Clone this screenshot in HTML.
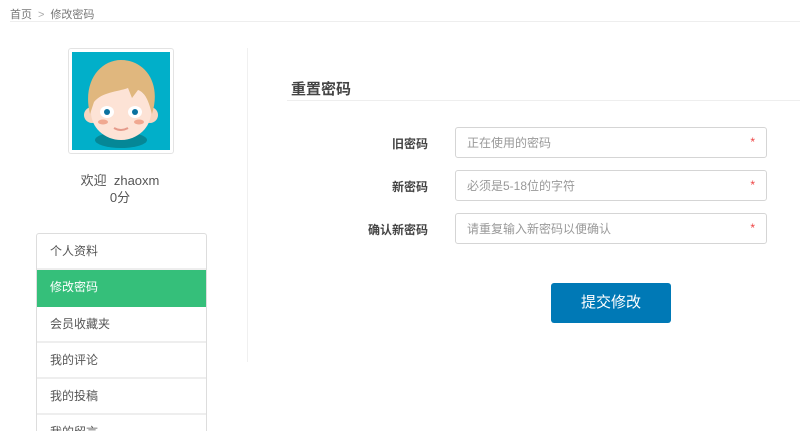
<!DOCTYPE html>
<html><head><meta charset="utf-8"><style>
*{margin:0;padding:0;box-sizing:border-box}
html,body{width:800px;height:431px;overflow:hidden}
body{background:#fff;font-family:"Liberation Sans","Noto Sans CJK SC",sans-serif;color:#555;position:relative}
.a{position:absolute}
.bc{left:10px;top:6px;font-size:11px;color:#777}
.bc span{color:#aaa;margin:0 6px}
.hl{left:10px;top:21px;width:790px;height:1px;background:#eee}
.av{left:68px;top:48px;width:106px;height:106px;border:1px solid #e3e3e3;border-radius:3px;background:#fff}
.vd{left:247px;top:48px;width:1px;height:314px;background:#f0f0f0}
.menu{left:36px;top:233px;width:171px;height:198px;border:1px solid #ddd;border-bottom:0;border-radius:3px 3px 0 0;overflow:hidden}
.menu div{height:36px;line-height:34px;padding-left:13px;font-size:12px;color:#555;border-bottom:2px solid #eee}
.menu .on{background:#35bf7a;color:#fff;border-bottom:0;height:37px}
.lbl{width:120px;text-align:right;font-size:12px;font-weight:bold;color:#444;left:308px}
.in{left:455px;width:312px;height:31px;border:1px solid #d5d5d5;border-radius:3px;font-size:12px;color:#999;padding-left:11px;display:flex;align-items:center}
.in b{position:absolute;right:11px;top:8px;color:#e44;font-weight:normal;line-height:12px}
</style></head><body>
<div class="a bc">首页<span>&gt;</span>修改密码</div>
<div class="a hl"></div>
<div class="a av">
<svg width="98" height="98" style="position:absolute;left:3px;top:3px" viewBox="0 0 98 98">
<rect width="98" height="98" fill="#01afc9"/>
<ellipse cx="49" cy="88" rx="26" ry="8" fill="#058796"/>
<circle cx="20" cy="63" r="8" fill="#f6d5c0"/><circle cx="78" cy="63" r="8" fill="#f6d5c0"/>
<ellipse cx="49" cy="60" rx="30" ry="28" fill="#fde3d6"/>
<path d="M18 62 C10 30 28 8 49 8 C72 8 90 30 80 62 C76 46 72 40 66 38 L60 46 L56 36 C45 40 30 40 22 50 Z" fill="#e0b77e"/>
<ellipse cx="35" cy="60" rx="7" ry="6" fill="#fff"/><ellipse cx="63" cy="60" rx="7" ry="6" fill="#fff"/>
<circle cx="35" cy="60" r="3" fill="#0a72a0"/><circle cx="63" cy="60" r="3" fill="#0a72a0"/>
<ellipse cx="31" cy="70" rx="5" ry="2.5" fill="#f0a890"/><ellipse cx="67" cy="70" rx="5" ry="2.5" fill="#f0a890"/>
<path d="M42 76 Q49 80 56 76" stroke="#e59a8a" stroke-width="2" fill="none"/>
</svg></div>
<div class="a" style="left:60px;top:172px;width:120px;text-align:center;font-size:13px;color:#555;line-height:17px">欢迎&nbsp; zhaoxm<br>0分</div>
<div class="a vd"></div>
<div class="a menu"><div>个人资料</div><div class="on">修改密码</div><div>会员收藏夹</div><div>我的评论</div><div>我的投稿</div><div>我的留言</div></div>
<div class="a" style="left:291px;top:78px;font-size:15px;font-weight:bold;color:#444">重置密码</div>
<div class="a" style="left:287px;top:100px;width:513px;height:1px;background:#eee"></div>
<div class="a lbl" style="top:135px">旧密码</div>
<div class="a lbl" style="top:178px">新密码</div>
<div class="a lbl" style="top:221px">确认新密码</div>
<div class="a in" style="top:127px">正在使用的密码<b>*</b></div>
<div class="a in" style="top:170px">必须是5-18位的字符<b>*</b></div>
<div class="a in" style="top:213px">请重复输入新密码以便确认<b>*</b></div>
<div class="a" style="left:551px;top:283px;width:120px;height:40px;background:#0079b6;border-radius:3px;color:#fff;font-size:15px;text-align:center;line-height:40px">提交修改</div>
</body></html>
